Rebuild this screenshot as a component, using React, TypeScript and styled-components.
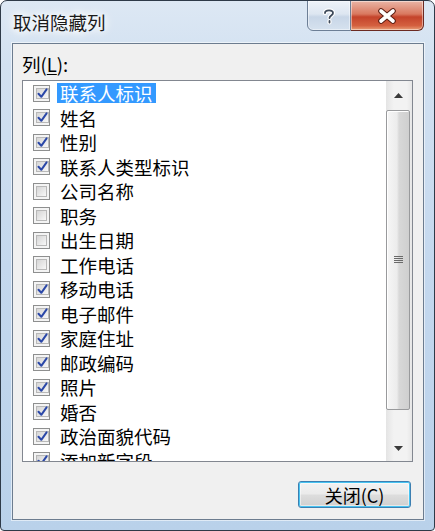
import React from "react";
import styled, { createGlobalStyle } from "styled-components";

const Global = createGlobalStyle`
  html, body { margin: 0; padding: 0; background: #ffffff; }
  * { box-sizing: border-box; }
`;

const FONT = `"Noto Sans CJK SC", "Noto Sans", sans-serif`;

const Window = styled.div`
  width: 435px;
  height: 531px;
  display: flex;
  flex-direction: column;
  border: 1px solid #2e3a48;
  border-radius: 7px 7px 4px 4px;
  background: linear-gradient(180deg, #dde8f4 0%, #d2e1f1 12%, #c4d8ee 50%, #b9d1ea 100%);
  font-family: ${FONT};
  overflow: hidden;
`;

const TitleBar = styled.div`
  height: 42px;
  display: flex;
  align-items: flex-start;
  justify-content: space-between;
  flex-shrink: 0;
`;

const Title = styled.div`
  padding: 8px 0 0 12px;
  font-size: 18.5px;
  line-height: 26px;
  color: #1a1a1a;
  text-shadow: 0 0 6px #ffffff, 0 0 10px #ffffff, 0 0 14px #ffffff;
`;

const Caption = styled.div`
  display: flex;
  margin-right: 10px;
  margin-top: -1px;
`;

const CapButton = styled.div<{ $kind: "help" | "close" }>`
  height: 31px;
  width: ${(p) => (p.$kind === "help" ? "44px" : "73px")};
  display: flex;
  align-items: center;
  justify-content: center;
  border: 1px solid ${(p) => (p.$kind === "help" ? "#6d7f96" : "#6b2a22")};
  border-left-width: ${(p) => (p.$kind === "close" ? "0" : "1px")};
  border-radius: ${(p) => (p.$kind === "help" ? "0 0 0 6px" : "0 0 6px 0")};
  background: ${(p) =>
    p.$kind === "help"
      ? "linear-gradient(180deg, #eef3f9 0%, #dde6f1 45%, #c8d6e7 55%, #d6e2ef 100%)"
      : "linear-gradient(180deg, #eab5a6 0%, #d9785f 45%, #c4432b 55%, #d4603f 85%, #e9a078 100%)"};
  box-shadow: inset 0 0 0 1px rgba(255, 255, 255, 0.45);
`;

const Client = styled.div`
  flex: 1;
  margin: 0 10px 10px 11px;
  border: 1px solid #6c7c8f;
  box-shadow: 0 0 0 1px rgba(255, 255, 255, 0.55);
  background: #f0f0f0;
  display: flex;
  flex-direction: column;
  padding: 6px 10px 10px 9px;
`;

const Label = styled.div`
  font-size: 18.5px;
  line-height: 28px;
  height: 28px;
  color: #000;
  margin-bottom: 2px;
`;

const Key = styled.span`
  text-decoration: underline;
  text-underline-offset: 2px;
`;

const ListBox = styled.div`
  height: 382px;
  border: 1px solid #828790;
  background: #ffffff;
  display: flex;
  overflow: hidden;
`;

const Items = styled.div`
  flex: 1;
  overflow: hidden;
  padding-left: 10px;
`;

const Row = styled.div`
  height: 24.5px;
  display: flex;
  align-items: center;
  gap: 7px;
`;

const Box = styled.div<{ $checked: boolean }>`
  width: 17px;
  height: 17px;
  flex-shrink: 0;
  border: 1px solid #8e8f8f;
  background: #f4f4f4;
  padding: 2px;
  display: flex;
`;

const BoxInner = styled.div`
  flex: 1;
  border: 1px solid #b8b8b8;
  background: linear-gradient(135deg, #d6d6d6 0%, #e8e8e8 55%, #f8f8f8 100%);
  display: flex;
  align-items: center;
  justify-content: center;
`;

const ItemText = styled.span<{ $selected: boolean }>`
  font-size: 18.5px;
  line-height: 20px;
  padding: 0 3px 0 3px;
  color: ${(p) => (p.$selected ? "#ffffff" : "#000000")};
  background: ${(p) => (p.$selected ? "#3399ff" : "transparent")};
  white-space: nowrap;
`;

const ScrollBar = styled.div`
  width: 26px;
  flex-shrink: 0;
  display: flex;
  flex-direction: column;
  background: linear-gradient(90deg, #e4e4e4 0%, #f2f2f2 30%, #f2f2f2 80%, #e6e6e6 100%);
  padding-right: 2px;
`;

const Arrow = styled.div<{ $h: number }>`
  height: ${(p) => p.$h}px;
  display: flex;
  align-items: center;
  justify-content: center;
  flex-shrink: 0;
`;

const Thumb = styled.div`
  height: 300px;
  margin-top: 1px;
  border: 1px solid #999a9c;
  border-radius: 2px;
  background: linear-gradient(90deg, #f6f6f6 0%, #ececec 45%, #d8d8d8 55%, #cfcfcf 100%);
  box-shadow: inset 1px 1px 0 #ffffff;
  display: flex;
  align-items: center;
  justify-content: center;
  flex-shrink: 0;
`;

const Track = styled.div`
  flex: 1;
`;

const Footer = styled.div`
  display: flex;
  justify-content: flex-end;
  margin-top: 19px;
  padding-right: 2px;
`;

const Button = styled.div`
  width: 113px;
  height: 27px;
  border: 1px solid #3c7fb1;
  border-radius: 3px;
  background: linear-gradient(180deg, #f2f2f2 0%, #ebebeb 48%, #dddddd 52%, #cfcfcf 100%);
  box-shadow: inset 0 0 0 1px #48c4f2, inset 0 0 0 2px rgba(255, 255, 255, 0.5);
  display: flex;
  align-items: center;
  justify-content: center;
  font-size: 18px;
  line-height: 24px;
  color: #000;
`;

const items: { label: string; checked: boolean }[] = [
  { label: "联系人标识", checked: true },
  { label: "姓名", checked: true },
  { label: "性别", checked: true },
  { label: "联系人类型标识", checked: true },
  { label: "公司名称", checked: false },
  { label: "职务", checked: false },
  { label: "出生日期", checked: false },
  { label: "工作电话", checked: false },
  { label: "移动电话", checked: true },
  { label: "电子邮件", checked: true },
  { label: "家庭住址", checked: true },
  { label: "邮政编码", checked: true },
  { label: "照片", checked: true },
  { label: "婚否", checked: true },
  { label: "政治面貌代码", checked: true },
  { label: "添加新字段", checked: true },
];

const Check = () => (
  <svg width="11" height="11" viewBox="0 0 11 11">
    <path d="M1.5 5.8 L4.3 8.8 L9.6 1.4" fill="none" stroke="#2b48a8" strokeWidth="2" strokeLinecap="round" strokeLinejoin="round" />
  </svg>
);

export default function App() {
  return (
    <>
      <Global />
      <Window>
        <TitleBar>
          <Title>取消隐藏列</Title>
          <Caption>
            <CapButton $kind="help">
              <svg width="14" height="18" viewBox="0 0 14 18">
                <path
                  d="M3 6 C3 2.5 11 2.5 11 6 C11 8.5 7.5 8.5 7.5 11 M7.5 14 L7.5 15.5"
                  fill="none"
                  stroke="#ffffff"
                  strokeWidth="4.2"
                  strokeLinecap="round"
                />
                <path
                  d="M3 6 C3 2.5 11 2.5 11 6 C11 8.5 7.5 8.5 7.5 11 M7.5 14 L7.5 15.5"
                  fill="none"
                  stroke="#3e4a5a"
                  strokeWidth="1.8"
                  strokeLinecap="round"
                />
              </svg>
            </CapButton>
            <CapButton $kind="close">
              <svg width="20" height="16" viewBox="0 0 20 16">
                <path d="M4 3 L16 13 M16 3 L4 13" stroke="#5a1d12" strokeWidth="5.6" strokeLinecap="round" />
                <path d="M4 3 L16 13 M16 3 L4 13" stroke="#ffffff" strokeWidth="3.6" strokeLinecap="round" />
              </svg>
            </CapButton>
          </Caption>
        </TitleBar>
        <Client>
          <Label>
            列(<Key>L</Key>):
          </Label>
          <ListBox>
            <Items>
              {items.map((it, i) => (
                <Row key={it.label}>
                  <Box $checked={it.checked}>
                    <BoxInner>{it.checked && <Check />}</BoxInner>
                  </Box>
                  <ItemText $selected={i === 0}>{it.label}</ItemText>
                </Row>
              ))}
            </Items>
            <ScrollBar>
              <Arrow $h={28}>
                <svg width="9" height="5" viewBox="0 0 9 5">
                  <path d="M0 5 L4.5 0 L9 5 Z" fill="#3a3a3a" />
                </svg>
              </Arrow>
              <Thumb>
                <svg width="9" height="8" viewBox="0 0 9 8">
                  <path d="M0 0.5 H9 M0 2.5 H9 M0 4.5 H9 M0 6.5 H9" stroke="#6a6a6a" strokeWidth="1" />
                </svg>
              </Thumb>
              <Track />
              <Arrow $h={26}>
                <svg width="9" height="5" viewBox="0 0 9 5">
                  <path d="M0 0 L9 0 L4.5 5 Z" fill="#3a3a3a" />
                </svg>
              </Arrow>
            </ScrollBar>
          </ListBox>
          <Footer>
            <Button>关闭(C)</Button>
          </Footer>
        </Client>
      </Window>
    </>
  );
}
